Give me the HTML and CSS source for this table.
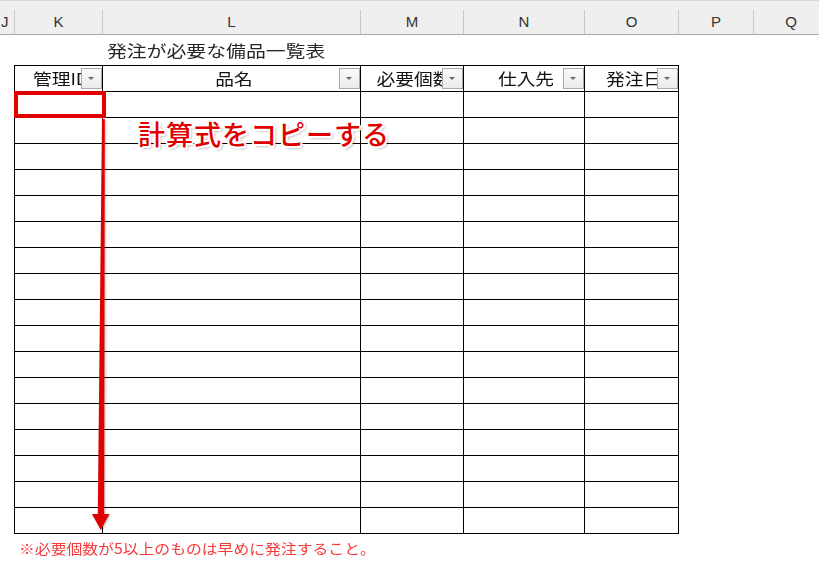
FILE: index.html
```html
<!DOCTYPE html>
<html lang="ja">
<head>
<meta charset="utf-8">
<title>発注が必要な備品一覧表</title>
<link rel="stylesheet" href="styles.css">
</head>
<body>
<div class="colbar">
  <div class="ch cj">J</div>
  <div class="ch ck">K</div>
  <div class="ch cl">L</div>
  <div class="ch cm">M</div>
  <div class="ch cn">N</div>
  <div class="ch co">O</div>
  <div class="ch cp">P</div>
  <div class="ch cq">Q</div>
</div>
<div class="sheet">
  <div class="title"><span class="tt">発注が必要な備品一覧表</span></div>
  <div class="tablewrap">
    <div class="grid">
      <div class="hd"><span class="ht">管理ID</span><span class="fb"></span></div>
      <div class="hd"><span class="ht">品名</span><span class="fb"></span></div>
      <div class="hd"><span class="ht">必要個数</span><span class="fb"></span></div>
      <div class="hd"><span class="ht">仕入先</span><span class="fb"></span></div>
      <div class="hd"><span class="ht">発注日</span><span class="fb"></span></div>
      <div></div><div></div><div></div><div></div><div></div>
      <div></div><div></div><div></div><div></div><div></div>
      <div></div><div></div><div></div><div></div><div></div>
      <div></div><div></div><div></div><div></div><div></div>
      <div></div><div></div><div></div><div></div><div></div>
      <div></div><div></div><div></div><div></div><div></div>
      <div></div><div></div><div></div><div></div><div></div>
      <div></div><div></div><div></div><div></div><div></div>
      <div></div><div></div><div></div><div></div><div></div>
      <div></div><div></div><div></div><div></div><div></div>
      <div></div><div></div><div></div><div></div><div></div>
      <div></div><div></div><div></div><div></div><div></div>
      <div></div><div></div><div></div><div></div><div></div>
      <div></div><div></div><div></div><div></div><div></div>
      <div></div><div></div><div></div><div></div><div></div>
      <div></div><div></div><div></div><div></div><div></div>
      <div></div><div></div><div></div><div></div><div></div>
    </div>
    <div class="selbox"></div>
    <svg class="arrow" width="120" height="470" viewBox="0 0 120 470">
      <polygon points="88,54 90.8,54 90.2,449 95.5,449 86.8,465 78,449 83.8,449" fill="#e00000"/>
    </svg>
    <div class="callout">計算式をコピーする</div>
  </div>
  <p class="note"><span class="nt">※必要個数が5以上のものは早めに発注すること。</span></p>
</div>
</body>
</html>
```
FILE: styles.css
```css
* { box-sizing: border-box; }
html, body { margin: 0; padding: 0; background: #fff; }
body {
  width: 819px;
  height: 588px;
  overflow: hidden;
  font-family: "Noto Sans CJK JP", "Noto Sans", sans-serif;
}
.colbar {
  display: flex;
  align-items: flex-end;
  height: 35px;
  background: #efefef;
  border-top: 1px solid #d9d9d9;
  border-bottom: 1px solid #a9a9a9;
  white-space: nowrap;
  overflow: hidden;
}
.ch {
  flex: none;
  height: 24px;
  line-height: 24px;
  text-align: center;
  border-right: 1px solid #c8c8c8;
  font-family: "Liberation Sans", Arial, sans-serif;
  font-size: 15px;
  color: #333;
}
.cj { width: 15px; text-align: left; padding-left: 1px; }
.ck { width: 88px; }
.cl { width: 258px; }
.cm { width: 103px; }
.cn { width: 121px; }
.co { width: 94px; }
.cp { width: 75px; }
.cq { width: 74px; border-right: none; }

.title {
  height: 30px;
  line-height: 30px;
  padding-left: 107px;
  white-space: nowrap;
}
.tt {
  display: inline-block;
  font-size: 16px;
  color: #262626;
  transform: scaleX(1.24);
  transform-origin: left center;
}
.tablewrap {
  position: relative;
  margin-left: 14px;
  width: 665px;
}
.grid {
  display: grid;
  grid-template-columns: 88px 258px 103px 121px 94px;
  grid-auto-rows: 26px;
  border-left: 1px solid #000;
  border-top: 1px solid #000;
  width: 665px;
}
.grid > div {
  border-right: 1px solid #000;
  border-bottom: 1px solid #000;
}
.hd {
  position: relative;
  text-align: center;
  overflow: hidden;
  white-space: nowrap;
  line-height: 25px;
}
.ht {
  display: inline-block;
  font-size: 16px;
  line-height: 25px;
  color: #111;
  transform: scaleX(1.17);
  transform-origin: center center;
  margin-left: 5px;
}
.fb {
  position: absolute;
  right: 0;
  top: 2px;
  width: 21px;
  height: 21px;
  border: 1px solid #aaa;
  background: linear-gradient(#fafafa, #ebebeb);
}
.fb::after {
  content: "";
  position: absolute;
  left: 6px;
  top: 8px;
  border-left: 3.5px solid transparent;
  border-right: 3.5px solid transparent;
  border-top: 3.5px solid #666;
}
.selbox {
  position: absolute;
  left: 0;
  top: 26px;
  width: 92px;
  height: 27px;
  border: 4px solid #e00000;
}
.arrow {
  position: absolute;
  left: 0;
  top: 0;
  filter: drop-shadow(1px 1px 1px rgba(0,0,0,0.25));
}
.callout {
  position: absolute;
  left: 124px;
  top: 54px;
  font-size: 27px;
  line-height: 30px;
  font-weight: 500;
  letter-spacing: 1px;
  color: #e00000;
  white-space: nowrap;
  text-shadow:
    -1.5px -1.5px 0 #fff, 1.5px -1.5px 0 #fff, -1.5px 1.5px 0 #fff, 1.5px 1.5px 0 #fff,
    0 -2px 0 #fff, 0 2px 0 #fff, -2px 0 0 #fff, 2px 0 0 #fff,
    2px 2px 3px rgba(0,0,0,0.45);
}
.note {
  margin: 4px 0 0 19px;
  line-height: 18px;
  white-space: nowrap;
}
.nt {
  display: inline-block;
  font-size: 14px;
  color: #f53a3a;
  transform: scaleX(1.13);
  transform-origin: left center;
}
```
